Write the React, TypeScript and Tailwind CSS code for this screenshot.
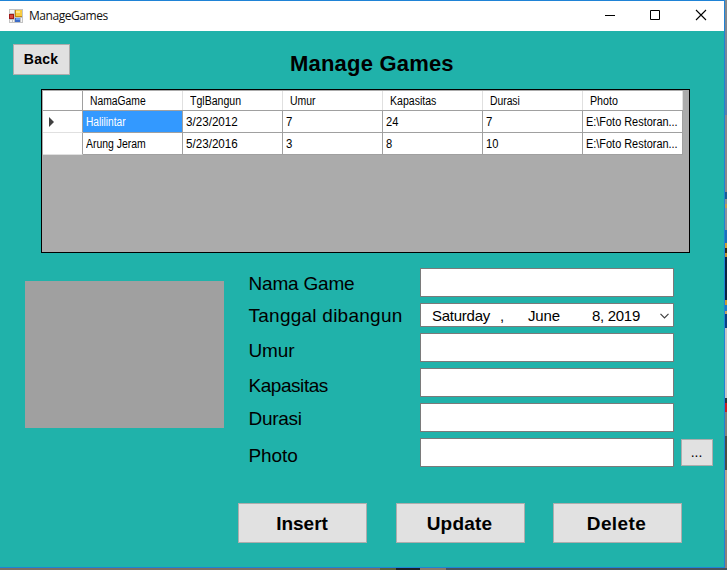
import type { ReactNode } from "react";

const columns: { name: string; cls: string }[] = [
  { name: "NamaGame", cls: "scale-x-[0.86]" },
  { name: "TglBangun", cls: "scale-x-[0.88]" },
  { name: "Umur", cls: "scale-x-[0.87]" },
  { name: "Kapasitas", cls: "scale-x-[0.88]" },
  { name: "Durasi", cls: "scale-x-[0.86]" },
  { name: "Photo", cls: "scale-x-[0.89]" },
];

const rows = [
  ["Halilintar", "3/23/2012", "7", "24", "7", "E:\\Foto Restoran..."],
  ["Arung Jeram", "5/23/2016", "3", "8", "10", "E:\\Foto Restoran..."],
];

const cellScale = [
  ["scale-x-[0.85]", "scale-x-[0.97]", "scale-x-[0.95]", "scale-x-[0.93]", "scale-x-[0.95]", "scale-x-[0.91]"],
  ["scale-x-[0.87]", "scale-x-[0.97]", "scale-x-[0.95]", "scale-x-[0.93]", "scale-x-[0.93]", "scale-x-[0.91]"],
];

function AppIcon() {
  return (
    <svg width="14" height="14" viewBox="0 0 14 14" shapeRendering="crispEdges">
      <path d="M0 0h14v14H0z" fill="#c3c3c3" />
      <path d="M1 1h4v3H1zM1 11h2v2H1zM4 11h1v2H4zM12 9h1v4h-1z" fill="#f4f4f4" />
      <path d="M0 5h5v5H0z" fill="#a01818" />
      <path d="M1 6h3v3H1z" fill="#d84a3a" />
      <path d="M6 1h7v7H6z" fill="#c48a10" />
      <path d="M7 1h6v6H7z" fill="#f8cc40" />
      <path d="M7 2h4v2H7z" fill="#fde58a" />
      <path d="M6 9h5v4H6z" fill="#3c6cc8" />
      <path d="M7 9h4v2H7z" fill="#6ca0f0" />
    </svg>
  );
}

function TitleBar() {
  return (
    <header className="flex h-[30px] items-center bg-white pl-[9px]">
      <AppIcon />
      <span className="ml-[6px] w-[100px] font-['Open_Sans','Noto_Sans',sans-serif] text-[12px] leading-[16px] tracking-[-0.45px] text-[#111]">
        ManageGames
      </span>
      <svg className="ml-auto" width="119" height="30" viewBox="0 0 119 30" fill="none" stroke="#000">
        <path d="M0 14.5h10" />
        <path d="M45.5 9.5h9v9h-9z" />
        <path d="M91 9l10 10M101 9l-10 10" strokeWidth="1.1" />
      </svg>
    </header>
  );
}

function Button({ className, children }: { className: string; children: ReactNode }) {
  return (
    <button className={`flex shrink-0 items-center justify-center border border-[#adadad] bg-[#e1e1e1] text-black ${className}`}>
      {children}
    </button>
  );
}

function GamesGrid() {
  return (
    <div className="ml-[41px] h-[164px] w-[649px] border border-black bg-[#ababab] pt-px pl-px text-[12px] text-black">
      <div className="flex h-[20px] w-[640px] border-b border-[#a0a0a0] bg-white">
        <div className="w-[40px] border-r border-[#a0a0a0]" />
        {columns.map((c) => (
          <div key={c.name} className="w-[100px] border-r border-[#e0e0e0] pl-[7px] leading-[20px]">
            <span className={`inline-block origin-left ${c.cls}`}>{c.name}</span>
          </div>
        ))}
      </div>
      {rows.map((row, r) => (
        <div key={row[0]} className="flex h-[22px] w-[640px] bg-white">
          <div className="flex w-[40px] items-center border-r border-b border-r-[#a0a0a0] border-b-[#e0e0e0] pl-[6px]">
            {r === 0 && (
              <svg width="5" height="10" viewBox="0 0 5 10">
                <path d="M0 0v10l5-5z" fill="#404040" />
              </svg>
            )}
          </div>
          {row.map((cell, i) => (
            <div
              key={i}
              className={`w-[100px] border-r border-b border-[#a0a0a0] pl-[3px] leading-[22px] whitespace-nowrap ${
                r === 0 && i === 0 ? "bg-[#3399ff] text-white" : ""
              }`}
            >
              <span className={`inline-block origin-left ${cellScale[r][i]}`}>{cell}</span>
            </div>
          ))}
        </div>
      ))}
    </div>
  );
}

function Label({ className, children }: { className: string; children: ReactNode }) {
  return <div className={`text-[19px] leading-[22px] whitespace-nowrap ${className}`}>{children}</div>;
}

function Field() {
  return <input className="block h-[29px] w-[254px] border border-[#7a7a7a] bg-white" />;
}

function DatePicker() {
  return (
    <div className="flex h-[24px] w-[254px] items-center border border-[#7a7a7a] bg-white pt-px pl-[11px] text-[15px] leading-[22px] text-black">
      <span className="w-[68px] tracking-[-0.25px]">Saturday</span>
      <span className="w-[28px]">,</span>
      <span className="w-[64px] tracking-[-0.15px]">June</span>
      <span className="w-[68px] tracking-[-0.3px] whitespace-nowrap">8, 2019</span>
      <svg width="9" height="6" viewBox="0 0 9 6" fill="none" stroke="#404040" strokeWidth="1.2">
        <path d="M0.5 0.8l4 4 4-4" />
      </svg>
    </div>
  );
}

export default function App() {
  return (
    <div className="flex h-[570px] w-[727px] flex-col overflow-hidden bg-[#776d62] font-['Liberation_Sans',Arial,sans-serif]">
      <div className="flex h-[568px]">
        <div className="flex w-[725px] flex-col border-t border-r border-b border-[#1f83d6] bg-[#20b2aa]">
          <TitleBar />
          <div className="flex h-[58px] pt-[13px] pl-[13px]">
            <Button className="h-[31px] w-[57px] pr-px text-[14px] font-bold tracking-[0.25px]">Back</Button>
            <h1 className="ml-[220px] pt-[7px] text-[22px] leading-[25px] font-bold tracking-[0.2px] whitespace-nowrap">
              Manage Games
            </h1>
          </div>
          <GamesGrid />
          <div className="flex pt-[15px]">
            <div className="mt-[13px] ml-[25px] h-[147px] w-[199px] bg-[#a0a0a0]" />
            <div className="ml-[24px] w-[172px] pl-[0.5px]">
              <Label className="mt-[5px] tracking-[-0.2px]">Nama Game</Label>
              <Label className="mt-[10px] tracking-[0.25px]">Tanggal dibangun</Label>
              <Label className="mt-[13px] tracking-[-0.1px]">Umur</Label>
              <Label className="mt-[13px] tracking-[-0.45px]">Kapasitas</Label>
              <Label className="mt-[11px] tracking-[-0.3px]">Durasi</Label>
              <Label className="mt-[15px] tracking-[-0.1px]">Photo</Label>
            </div>
            <div className="flex flex-col gap-[6px]">
              <Field />
              <DatePicker />
              <Field />
              <Field />
              <Field />
              <Field />
            </div>
            <Button className="mt-[171px] ml-[7px] h-[27px] w-[32px] pr-px text-[14px]">...</Button>
          </div>
          <div className="mt-[36px] ml-[238px] flex">
            <Button className="h-[40px] w-[129px] pt-[2px] pr-px text-[19px] font-bold">Insert</Button>
            <Button className="ml-[29px] h-[40px] w-[129px] pt-[2px] pr-[2px] text-[19px] font-bold tracking-[0.2px]">
              Update
            </Button>
            <Button className="ml-[28px] h-[40px] w-[129px] pt-[2px] pr-[2px] text-[19px] font-bold tracking-[0.4px]">
              Delete
            </Button>
          </div>
        </div>
        <div className="flex w-[2px] flex-col bg-[#8c8078]">
          <div className="h-[115px] bg-linear-to-b from-[#8a8a8a] to-[#5b7fa8]" />
          <div className="h-[77px] bg-[#8a8688]" />
          <div className="h-[7px] bg-[#1c5c90]" />
          <div className="h-[5px] bg-[#909090]" />
          <div className="h-[4px] bg-[#c09a50]" />
          <div className="h-[22px] bg-[#8c9098]" />
          <div className="h-[13px] bg-[#1c70b8]" />
          <div className="h-[5px] bg-[#d0a030]" />
          <div className="h-[5px] bg-[#302818]" />
          <div className="h-[4px] bg-[#c09030]" />
          <div className="h-[43px] bg-[#0c2440]" />
          <div className="h-[5px] bg-[#c89a30]" />
          <div className="h-[6px] bg-[#2078c0]" />
          <div className="h-[3px] bg-[#c0a060]" />
          <div className="h-[14px] bg-[#0c4080]" />
          <div className="h-[70px] bg-[#c8c4c4]" />
          <div className="h-[5px] bg-[#303438]" />
          <div className="h-[9px] bg-[#c82020]" />
          <div className="h-[24px] bg-[#858078]" />
          <div className="h-[34px] bg-[#4c4c42]" />
          <div className="h-[60px] bg-[#b8a08c]" />
        </div>
      </div>
      <div className="flex h-[2px]">
        <div className="w-[380px] bg-[#7b6f62]" />
        <div className="w-[16px] bg-[#5a6238]" />
        <div className="w-[24px] bg-[#1c2022]" />
        <div className="w-[26px] bg-[#8a7a68]" />
        <div className="flex-1 bg-[#49535a]" />
      </div>
    </div>
  );
}
